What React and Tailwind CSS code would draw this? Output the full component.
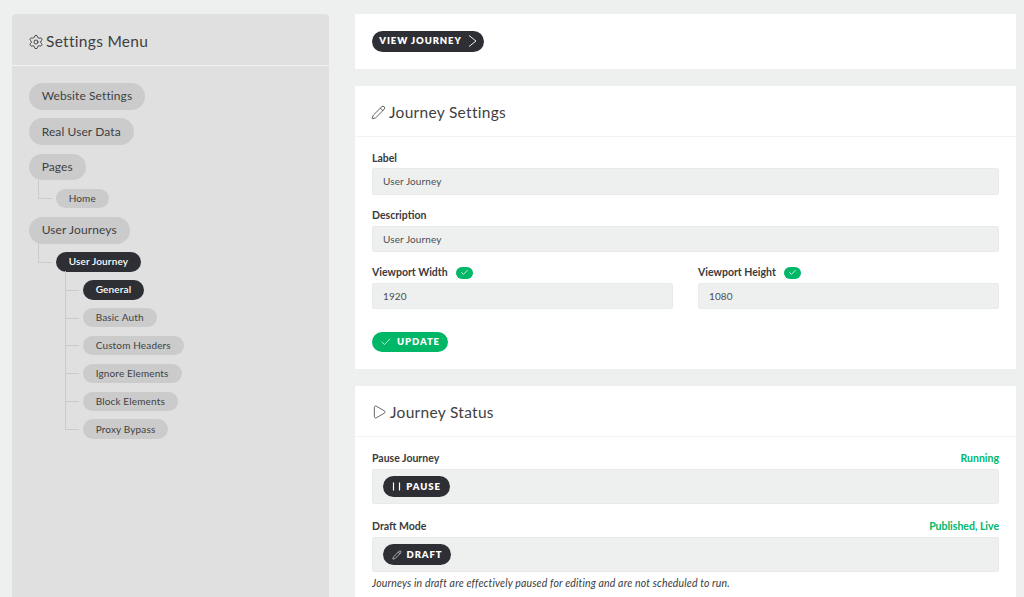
import { Settings, Pencil, Play, Check } from 'lucide-react'

const font = "font-['Lato','Noto_Sans',sans-serif]"

function Branch({ last }) {
  return (
    <span className="relative mr-[4px] block h-[19.33px] w-[14px] shrink-0">
      <span className={`absolute left-0 top-[-9px] w-[1px] bg-[#cbcbcb] ${last ? 'h-[19px]' : 'h-[28px]'}`} />
      <span className="absolute left-0 top-[9.5px] h-[1px] w-[14px] bg-[#cbcbcb]" />
    </span>
  )
}

function Pill({ children }) {
  return (
    <div className="flex h-[26.67px] w-fit items-center rounded-full bg-[#cbcbcb] px-[13px] text-[12px] tracking-[0.1px] text-[#3f3f42]">
      {children}
    </div>
  )
}

function SubPill({ children, dark }) {
  return (
    <div
      className={`flex h-[19.33px] w-fit items-center rounded-full px-[13px] text-[10px] tracking-[0.15px] ${
        dark ? 'bg-[#2e2f34] font-semibold text-white' : 'bg-[#cbcbcb] text-[#3f3f42]'
      }`}
    >
      {children}
    </div>
  )
}

function Sidebar() {
  const children = ['Basic Auth', 'Custom Headers', 'Ignore Elements', 'Block Elements', 'Proxy Bypass']
  return (
    <aside className="h-[583px] w-[317px] shrink-0 rounded-t-[4px] bg-[#e0e0e0]">
      <div className="flex h-[52px] items-center gap-[2px] border-b border-[#f3f3f3] pl-[16px] pt-[4px] text-[#3f3f42]">
        <Settings size={16} strokeWidth={1.4} />
        <span className="text-[15.5px] tracking-[0.3px]">Settings Menu</span>
      </div>
      <div className="flex flex-col gap-[8.67px] pl-[16.67px] pt-[17px]">
        <Pill>Website Settings</Pill>
        <Pill>Real User Data</Pill>
        <Pill>Pages</Pill>
        <div className="flex items-center pl-[9px]">
          <Branch last />
          <SubPill>Home</SubPill>
        </div>
        <Pill>User Journeys</Pill>
        <div className="flex items-center pl-[9px]">
          <Branch last />
          <SubPill dark>User Journey</SubPill>
        </div>
        <div className="flex flex-col gap-[8.5px]">
          <div className="flex items-center pl-[36px]">
            <Branch />
            <SubPill dark>General</SubPill>
          </div>
          {children.map((name, i) => (
            <div key={name} className="flex items-center pl-[36px]">
              <Branch last={i === children.length - 1} />
              <SubPill>{name}</SubPill>
            </div>
          ))}
        </div>
      </div>
    </aside>
  )
}

function CardHeader({ icon, title }) {
  return (
    <div className="flex h-[51px] items-center gap-[3px] border-b border-[#f1f2f1] pl-[16px] pt-[3px] text-[#3f3f42]">
      {icon}
      <span className="text-[15.5px] tracking-[0.3px]">{title}</span>
    </div>
  )
}

function FieldLabel({ children }) {
  return <div className="h-[11px] text-[10.5px] font-bold leading-[11px] text-[#3a3a3d]">{children}</div>
}

function Input({ value, className = '' }) {
  return (
    <div
      className={`flex h-[26.67px] items-center rounded-[2px] border border-[#e9eaea] bg-[#eef0ef] pl-[10px] pt-[1px] text-[10px] tracking-[0.1px] text-[#4d4d50] ${className}`}
    >
      {value}
    </div>
  )
}

function CheckBadge() {
  return (
    <span className="flex h-[12px] w-[17px] items-center justify-center rounded-full bg-[#00b667] text-white">
      <Check size={9} strokeWidth={2} />
    </span>
  )
}

function ActionButton({ icon, children, green, width }) {
  return (
    <div
      className={`flex h-[20.67px] items-center justify-center gap-[5px] rounded-full text-[9.5px] font-extrabold tracking-[0.9px] text-white ${width} ${
        green ? 'bg-[#00b667]' : 'bg-[#2e2f34]'
      }`}
    >
      {icon}
      <span className="pt-[1px]">{children}</span>
    </div>
  )
}

function PauseIcon() {
  return (
    <svg width="9" height="9" viewBox="0 0 9 9" fill="none" stroke="white" strokeWidth="1.2">
      <path d="M1.5 0.5v8M7.5 0.5v8" />
    </svg>
  )
}

function ChevronIcon() {
  return (
    <svg width="9" height="12" viewBox="0 0 9 12" fill="none" stroke="white" strokeWidth="0.9">
      <path d="M1 0.5L8 6L1 11.5" />
    </svg>
  )
}

export default function App() {
  return (
    <div className={`flex h-[597px] w-[1024px] gap-[26px] overflow-hidden bg-[#eef0ef] pl-[12px] pt-[14px] ${font}`}>
      <Sidebar />

      <main className="flex w-[661px] shrink-0 flex-col gap-[17px]">
        <section className="bg-white p-[17px]">
          <div className="flex h-[20.67px] w-[112px] items-center justify-center gap-[6px] rounded-full bg-[#2e2f34] text-[9.5px] font-extrabold tracking-[0.9px] text-white">
            <span>VIEW JOURNEY</span>
            <ChevronIcon />
          </div>
        </section>

        <section className="h-[283px] bg-white">
          <CardHeader icon={<Pencil size={15} strokeWidth={1.3} />} title="Journey Settings" />
          <div className="px-[17px] pt-[16px]">
            <FieldLabel>Label</FieldLabel>
            <Input value="User Journey" className="mt-[4.33px]" />
            <div className="mt-[15.67px]">
              <FieldLabel>Description</FieldLabel>
            </div>
            <Input value="User Journey" className="mt-[4.33px]" />
            <div className="mt-[14.33px] grid grid-cols-[301px_301px] gap-[25px]">
              <div>
                <div className="flex h-[12px] items-center gap-[8px]">
                  <FieldLabel>Viewport Width</FieldLabel>
                  <CheckBadge />
                </div>
                <Input value="1920" className="mt-[4px]" />
              </div>
              <div>
                <div className="flex h-[12px] items-center gap-[8px]">
                  <FieldLabel>Viewport Height</FieldLabel>
                  <CheckBadge />
                </div>
                <Input value="1080" className="mt-[4px]" />
              </div>
            </div>
            <div className="mt-[22.5px]">
              <ActionButton green width="w-[76px]" icon={<Check size={12} strokeWidth={1.4} />}>
                UPDATE
              </ActionButton>
            </div>
          </div>
        </section>

        <section className="flex-1 bg-white">
          <CardHeader icon={<Play size={16} strokeWidth={1.2} />} title="Journey Status" />
          <div className="px-[17px] pt-[16px]">
            <div className="flex items-end justify-between">
              <FieldLabel>Pause Journey</FieldLabel>
              <span className="h-[11px] text-[10.5px] font-bold leading-[11px] text-[#00b667]">Running</span>
            </div>
            <div className="mt-[5px] flex h-[35.67px] items-center rounded-[2px] border border-[#e9eaea] bg-[#eef0ef] pl-[10px]">
              <ActionButton width="w-[67px]" icon={<PauseIcon />}>
                PAUSE
              </ActionButton>
            </div>
            <div className="mt-[16.5px] flex items-end justify-between">
              <FieldLabel>Draft Mode</FieldLabel>
              <span className="h-[11px] text-[10.5px] font-bold leading-[11px] text-[#00b667]">Published, Live</span>
            </div>
            <div className="mt-[5px] flex h-[35.67px] items-center rounded-[2px] border border-[#e9eaea] bg-[#eef0ef] pl-[10px]">
              <ActionButton width="w-[68px]" icon={<Pencil size={10} strokeWidth={1.4} />}>
                DRAFT
              </ActionButton>
            </div>
            <p className="mt-[4px] text-[10.5px] italic tracking-[0.15px] text-[#3a3a3d]">
              Journeys in draft are effectively paused for editing and are not scheduled to run.
            </p>
          </div>
        </section>
      </main>
    </div>
  )
}
